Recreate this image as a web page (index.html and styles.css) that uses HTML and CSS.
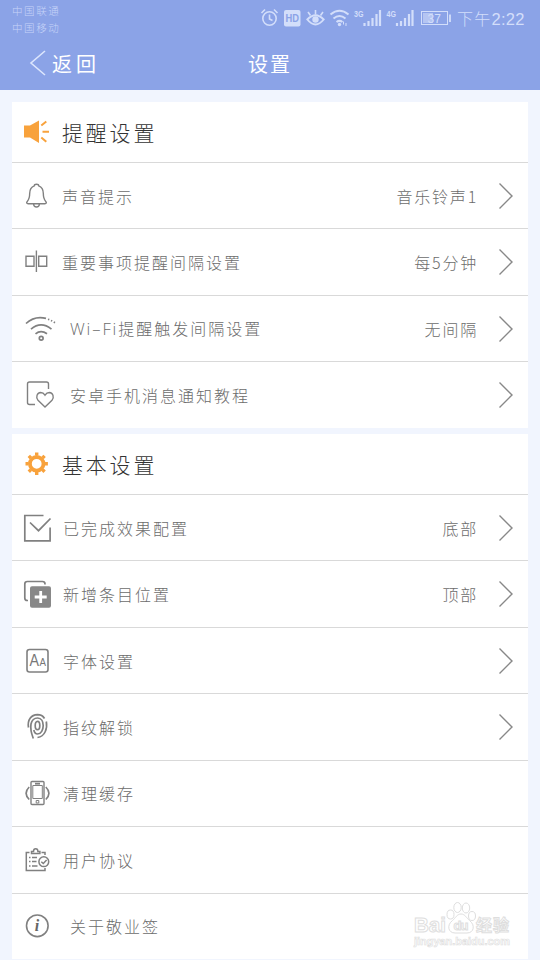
FILE: index.html
```html
<!DOCTYPE html>
<html lang="zh-CN">
  <head>
    <meta charset="UTF-8" />
    <meta name="viewport" content="width=device-width, initial-scale=1.0" />
    <title>设置</title>
    <link rel="stylesheet" href="styles.css">
  </head>
  <body>
    <header class="header">
      <div class="status">
        <div class="carriers">
          <span>中国联通</span>
          <span>中国移动</span>
        </div>
        <div class="indicators">
          <svg width="192" height="20" viewBox="0 0 192 20" fill="none" stroke="#d3defa" stroke-width="1.6">
            <!-- alarm -->
            <circle cx="9.5" cy="10.5" r="6.7" />
            <path d="M9.5 6.5v4.5l3 1.5M1.5 5L5 1.5M17.5 5L14 1.5" />
            <!-- hd -->
            <rect x="24" y="2" width="16.5" height="16.5" rx="2" fill="#d3defa" stroke="none" />
            <text class="hd-text" x="25.5" y="14.2" textLength="13.5" lengthAdjust="spacingAndGlyphs">HD</text>
            <!-- eye -->
            <path d="M47.3 11.5q8.2-8.5 16.4 0q-8.2 10-16.4 0z" stroke-width="1.9" />
            <circle cx="55.5" cy="11.5" r="3.2" fill="#d3defa" stroke="none" />
            <path d="M55.5 6.5V2M50.5 7.5L48 4M60.5 7.5L63 4" />
            <!-- wifi -->
            <path d="M70.5 6.5q9-7.5 18 0M73.5 10.5q6-5 12 0M76.5 14q3-2.3 6 0" stroke-width="2" />
            <circle cx="79.5" cy="16.5" r="1.7" fill="#d3defa" stroke="none" />
            <path d="M83.5 13.5v3M86 15v3" stroke-width="1" />
            <!-- signal bars -->
            <text class="net-text" x="94" y="8.5" textLength="9.5" lengthAdjust="spacingAndGlyphs">3G</text>
            <path d="M104.5 18v-3M108.5 18v-5M112.5 18v-8M116.5 18V6M120 18V2" stroke-width="2.2" />
            <text class="net-text" x="126.5" y="8.5" textLength="9.5" lengthAdjust="spacingAndGlyphs">4G</text>
            <path d="M137 18v-3M141 18v-5M145 18v-8M149 18V6M152.5 18V2" stroke-width="2.2" />
            <!-- battery -->
            <rect x="161.5" y="3.5" width="26" height="13" stroke-width="1" />
            <rect x="163" y="5" width="10" height="10" fill="#b5c5f2" stroke="none" />
            <path d="M190 6.5v7.5" stroke-width="1.8" />
            <text class="battery-text" x="167.5" y="14.5" textLength="13.5">37</text>
          </svg>
          <span class="time">下午<span class="clock">2:22</span></span>
        </div>
      </div>
      <div class="navbar">
        <div class="back">
          <svg width="18" height="26" viewBox="0 0 18 26" fill="none" stroke="#dce6fd" stroke-width="1.6">
            <path d="M16 1L2 13l14 12" />
          </svg>
          <span>返回</span>
        </div>
        <h1 class="title">设置</h1>
      </div>
    </header>

    <main class="content">
      <section class="card">
        <div class="card-head">
          <svg class="icon" viewBox="0 0 34 34" fill="#f8a23c">
            <path d="M2 10.5h6L17 5.500v22.500l-9-5.500H2z" />
            <path d="M19.300 10.500l5-4M20.500 16.800H27M19.300 22.500l5 4.300" stroke="#f8a23c" stroke-width="2" />
          </svg>
          <h2>提醒设置</h2>
        </div>
        <div class="row">
          <svg class="icon" viewBox="0 0 34 34">
            <path d="M12.300 6.800q0-1.500 2.200-1.500t2.200 1.500c3.500 1.200 4.600 4 4.600 7.500 0 4.200.7 6.300 2.600 8.400.8 1 .5 2-1 2H6.100c-1.500 0-1.800-1-1-2 1.900-2.100 2.600-4.200 2.600-8.400 0-3.500 1.100-6.300 4.600-7.500zM11.500 25q.3 3 3 3t3-3" />
          </svg>
          <span class="label">声音提示</span>
          <span class="value">音乐铃声1</span>
          <svg class="arrow" viewBox="0 0 16 28"><path d="M1.500 1.500L14 14 1.500 26.500" /></svg>
        </div>
        <div class="row">
          <svg class="icon" viewBox="0 0 34 34">
            <path d="M4 11.300h8v10H4zM16.700 11.300h8v10h-8zM14.400 5.500v21.500" />
          </svg>
          <span class="label">重要事项提醒间隔设置</span>
          <span class="value">每5分钟</span>
          <svg class="arrow" viewBox="0 0 16 28"><path d="M1.500 1.500L14 14 1.500 26.500" /></svg>
        </div>
        <div class="row">
          <svg class="icon" viewBox="0 0 34 34">
            <g stroke-width="1.7">
              <path d="M4 11.500Q12.500 3.500 24 6.400M9 17.200q10-8.500 20.500 0M13.500 21.800q5.500-4.500 11.500 0" />
              <circle cx="19.200" cy="26.300" r="1.900" />
              <path d="M26 7.200l1.300.4M29 8.400l1.200.6M31.800 10l1.200.8" />
            </g>
          </svg>
          <span class="label indent"><span class="latin">Wi–Fi</span>提醒触发间隔设置</span>
          <span class="value">无间隔</span>
          <svg class="arrow" viewBox="0 0 16 28"><path d="M1.500 1.500L14 14 1.500 26.500" /></svg>
        </div>
        <div class="row">
          <svg class="icon" viewBox="0 0 34 34">
            <path d="M26.500 11V6q0-2-2-2H7.500q-2 0-2 2v18.500q0 2 2 2H13" />
            <path d="M23 29l-7-6.800c-2.500-2.800-1-7.500 2.500-7.700 2 0 3.500 1 4.500 2.600 1-1.600 2.500-2.600 4.500-2.600 3.500.2 5 4.900 2.500 7.700z" />
          </svg>
          <span class="label indent">安卓手机消息通知教程</span>
          <svg class="arrow" viewBox="0 0 16 28"><path d="M1.500 1.500L14 14 1.500 26.500" /></svg>
        </div>
      </section>

      <section class="card">
        <div class="card-head">
          <svg class="icon" viewBox="0 0 34 34" fill="none" stroke="#f8a23c">
            <circle cx="14.700" cy="16.800" r="6.800" stroke-width="3.8" />
            <path d="M14.700 5.600v3M14.700 25v3M3.500 16.800h3M22.900 16.800h3M6.800 8.900l2.100 2.100M20.500 22.600l2.100 2.100M6.800 24.700l2.100-2.100M20.500 11l2.100-2.100" stroke-width="3.4" />
          </svg>
          <h2>基本设置</h2>
        </div>
        <div class="row">
          <svg class="icon" viewBox="0 0 34 34">
            <path d="M21.500 4.500H2.800v25.300h25.300V16.500M8 11.500l8.500 8.200L28.500 7.500" stroke-width="1.7" />
          </svg>
          <span class="label nudge">已完成效果配置</span>
          <span class="value">底部</span>
          <svg class="arrow" viewBox="0 0 16 28"><path d="M1.500 1.500L14 14 1.500 26.500" /></svg>
        </div>
        <div class="row">
          <svg class="icon" viewBox="0 0 34 34">
            <path d="M23 7.500V7q0-2.500-2.500-2.500H5.300q-2.500 0-2.500 2.500v14q0 2.500 2.500 2.500H6" stroke-width="1.7" />
            <rect x="8" y="9.300" width="21" height="21.500" rx="2" fill="#888" stroke="none" />
            <path d="M18.700 14v12M12.700 20h12" stroke="#fff" stroke-width="2.8" />
          </svg>
          <span class="label nudge">新增条目位置</span>
          <span class="value">顶部</span>
          <svg class="arrow" viewBox="0 0 16 28"><path d="M1.500 1.500L14 14 1.500 26.500" /></svg>
        </div>
        <div class="row">
          <svg class="icon" viewBox="0 0 34 34">
            <rect x="5" y="5.500" width="21" height="22.500" rx="2.500" stroke-width="1.6" />
            <text class="font-text" x="7.500" y="22" font-size="16" textLength="9.500" lengthAdjust="spacingAndGlyphs">A</text>
            <text class="font-text" x="17.500" y="22" font-size="11" textLength="6.500" lengthAdjust="spacingAndGlyphs">A</text>
          </svg>
          <span class="label nudge">字体设置</span>
          <svg class="arrow" viewBox="0 0 16 28"><path d="M1.500 1.500L14 14 1.500 26.500" /></svg>
        </div>
        <div class="row">
          <svg class="icon" viewBox="0 0 34 34">
            <g stroke-width="1.7">
              <ellipse cx="15.500" cy="15.500" rx="2.300" ry="4.200" />
              <path d="M11.300 28.500C9 22.500 8.300 18 9 14c1-4.500 4-6 6.700-6 3.500 0 5.500 3.300 5.500 7.500s-2 8.500-5.700 8.500c-2 0-3.200-1.800-3.700-4" />
              <path d="M6.500 17.500C5.300 10 9 4.900 15.500 4.700c3 0 5.500 1.300 7 3.800M24.300 11.500c1.300 7-1.300 15-8.800 16" />
            </g>
          </svg>
          <span class="label nudge">指纹解锁</span>
          <svg class="arrow" viewBox="0 0 16 28"><path d="M1.500 1.500L14 14 1.500 26.500" /></svg>
        </div>
        <div class="row">
          <svg class="icon" viewBox="0 0 34 34">
            <rect x="9" y="5.500" width="13" height="23" rx="1" />
            <g stroke-width="1">
              <path d="M10.800 9.500h9.500v13h-9.500zM14.200 24.500h2.600v2.500h-2.600z" />
              <path d="M13 7.700h5" stroke-width="1.8" />
            </g>
            <path d="M7.200 11c-4 4-4 8.500 0 12.500M23.800 11c4 4 4 8.500 0 12.500" stroke-width="1.6" />
          </svg>
          <span class="label nudge">清理缓存</span>
        </div>
        <div class="row">
          <svg class="icon" viewBox="0 0 34 34">
            <g stroke-width="1.5">
              <path d="M7.500 9.500H4.300v18H23V25M19.500 9.500H23V12M9.500 10.500V8.500h2q0-2.700 2.200-2.700t2.200 2.700h2v2z" />
              <path d="M7 14.500h1.500M10 14.500h5M7 18.500h1.500M10 18.500h4.500M7 23h1.500M10 23h5.500" />
              <circle cx="21.800" cy="18.700" r="4.900" />
              <path d="M19.300 18.700l2 1.800 3.300-3.500" />
            </g>
          </svg>
          <span class="label nudge">用户协议</span>
        </div>
        <div class="row">
          <svg class="icon" viewBox="0 0 34 34">
            <circle cx="15.300" cy="16.800" r="10.800" stroke-width="1.6" />
            <text class="info-text" x="12.800" y="22">i</text>
          </svg>
          <span class="label indent">关于敬业签</span>
        </div>
      </section>
    </main>

    <!-- watermark -->
    <svg class="watermark" width="104" height="56" viewBox="0 0 104 56">
      <text class="wm-main" x="1" y="32" textLength="32" lengthAdjust="spacingAndGlyphs">Bai</text>
      <ellipse cx="37.500" cy="14.500" rx="3.500" ry="4.500" />
      <ellipse cx="44.500" cy="7.500" rx="3.700" ry="5" />
      <ellipse cx="53" cy="8" rx="3.700" ry="5" />
      <ellipse cx="59" cy="16" rx="3.500" ry="4.500" />
      <path d="M48 14c-4 0-5.500 4-8.500 6.500-6 4.500-4.500 12.500 2.500 12.500h12c7 0 8.500-8 2.500-12.500-3-2.500-4.500-6.500-8.500-6.500z" />
      <text class="wm-du" x="40.500" y="30" textLength="15">du</text>
      <text class="wm-cn" x="63" y="31" textLength="33">经验</text>
      <text class="wm-url" x="1" y="44.500" textLength="96" lengthAdjust="spacingAndGlyphs">jingyan.baidu.com</text>
    </svg>
  </body>
</html>
```
FILE: styles.css
```css
* {
  box-sizing: border-box;
}
body {
  margin: 0;
  width: 540px;
  height: 960px;
  overflow: hidden;
  position: relative;
  background: #f1f5fe;
  font-family: "Noto Sans CJK SC", sans-serif;
  font-weight: 300;
  color: #6c6c6c;
}
h1,
h2 {
  margin: 0;
  font-weight: 300;
}

/* header */
.header {
  height: 90px;
  background: #8ba3e7;
  color: #fff;
}
.status {
  display: flex;
  justify-content: space-between;
  height: 38px;
  padding: 3px 14px 0 12px;
}
.carriers {
  display: flex;
  flex-direction: column;
  font-size: 10.5px;
  line-height: 16.5px;
  letter-spacing: 1.6px;
  color: #c6d3f8;
}
.indicators {
  display: flex;
  align-items: flex-start;
  padding-top: 5px;
}
.time {
  margin-left: 5px;
  width: 69px;
  font-size: 16px;
  line-height: 21px;
  letter-spacing: 1.2px;
  white-space: nowrap;
  color: #d3defa;
}
.clock {
  font-family: "Liberation Sans", sans-serif;
  font-size: 16.5px;
  letter-spacing: 0.3px;
}
.hd-text {
  font: bold 11px "Liberation Sans", sans-serif;
  fill: #8ba3e7;
  stroke: none;
}
.net-text {
  font: bold 9.5px "Liberation Sans", sans-serif;
  fill: #d3defa;
  stroke: none;
}
.battery-text {
  font: 12px "Liberation Sans", sans-serif;
  fill: #d3defa;
  stroke: none;
}
.navbar {
  display: grid;
  grid-template-columns: 1fr auto 1fr;
  align-items: center;
  height: 52px;
  padding: 0 0 2px 29px;
}
.back {
  display: flex;
  align-items: center;
  font-size: 20px;
  font-weight: 400;
  line-height: 26px;
  letter-spacing: 4px;
}
.back span {
  margin: 1px 0 0 5px;
}
.title {
  margin: 2px 29px 0 0;
  font-size: 20px;
  font-weight: 400;
  line-height: 26px;
  letter-spacing: 2px;
}

/* cards */
.content {
  padding: 12px 12px 0;
}
.card {
  margin-bottom: 6.2px;
  background: #fff;
}
.card-head {
  display: flex;
  align-items: center;
  height: 60px;
  padding-left: 10px;
}
.card-head h2 {
  margin: 0 0 0 6px;
  font-size: 21px;
  line-height: 30px;
  letter-spacing: 2.8px;
  color: #333;
}
.row {
  display: flex;
  align-items: center;
  height: 66.45px;
  padding: 0 14px 0 10px;
  border-top: 1px solid #d9d9d9;
}
.icon {
  width: 34px;
  height: 34px;
  flex: none;
}
.row .icon {
  fill: none;
  stroke: #808080;
  stroke-width: 1.4;
}
.label,
.value {
  font-size: 16px;
  line-height: 24px;
  letter-spacing: 2px;
  white-space: nowrap;
}
.label {
  margin-left: 6px;
  margin-right: auto;
}
.label.nudge {
  margin-left: 7px;
}
.label.indent {
  margin-left: 14px;
}
.latin {
  font-family: "Open Sans", sans-serif;
  font-size: 16.5px;
  letter-spacing: 1.9px;
}
.value {
  margin-right: 20px;
  letter-spacing: 1.8px;
}
.arrow {
  width: 16px;
  height: 28px;
  fill: none;
  stroke: #888;
  stroke-width: 1.4;
}
.icon .font-text {
  font-family: "Liberation Sans", sans-serif;
  fill: #777;
  stroke: none;
}
.icon .info-text {
  font: italic bold 16px "Liberation Serif", serif;
  fill: #666;
  stroke: none;
}

/* watermark sits over the last row */
.watermark {
  position: absolute;
  left: 413px;
  top: 900px;
  fill: #fff;
  stroke: #dedede;
  stroke-width: 1;
}
.watermark text {
  font-family: "Liberation Sans", "Noto Sans CJK SC", sans-serif;
  font-weight: bold;
}
.wm-main {
  font-size: 21px;
}
.wm-du {
  font-size: 13px;
}
.wm-cn {
  font-size: 16px;
}
.wm-url {
  font-size: 10.5px;
  stroke-width: 0.6;
}
```
